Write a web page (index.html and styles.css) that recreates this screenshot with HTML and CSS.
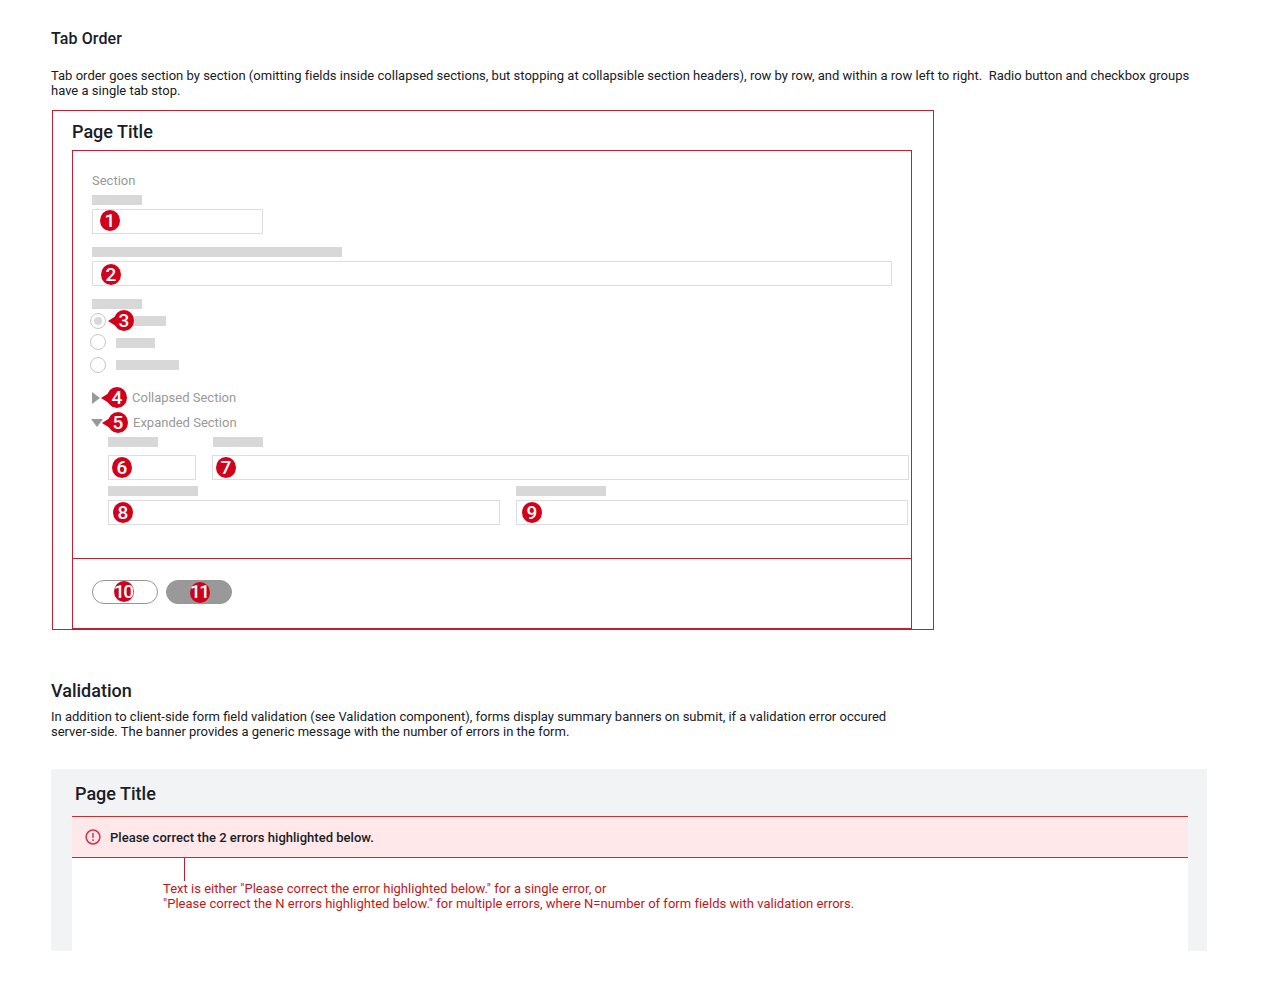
FILE: index.html
```html
<!DOCTYPE html>
<html lang="en">
<head>
<meta charset="utf-8">
<title>Form guidelines</title>
<link rel="stylesheet" href="styles.css">
</head>
<body>
<main class="doc">
  <section class="tab-order">
    <h2 class="heading heading-small">Tab Order</h2>
    <p class="copy">Tab order goes section by section (omitting fields inside collapsed sections, but stopping at collapsible section headers), row by row, and within a row left to right.&nbsp; Radio button and checkbox groups<br>have a single tab stop.</p>
    <div class="frame">
      <h3 class="page-title">Page Title</h3>
      <div class="form">
        <div class="form-body">
          <div class="section-label">Section</div>
          <div class="bar w50"></div>
          <div class="field short"><span class="marker m1">1</span></div>
          <div class="bar w250"></div>
          <div class="field"><span class="marker m2">2</span></div>
          <div class="bar w50"></div>
          <div class="radios">
            <div class="radio-row"><span class="radio checked"></span><span class="bar w50"></span><span class="marker pointed m3">3</span></div>
            <div class="radio-row second"><span class="radio"></span><span class="bar w39"></span></div>
            <div class="radio-row"><span class="radio"></span><span class="bar w63"></span></div>
          </div>
          <div class="toggle"><svg class="arrow-right" width="8" height="12" viewBox="0 0 8 12"><path d="M0 0L8 6L0 12Z"/></svg><span class="marker pointed m4">4</span><span class="toggle-label">Collapsed Section</span></div>
          <div class="toggle open"><svg class="arrow-down" width="12" height="8" viewBox="0 0 12 8"><path d="M0 0H12L6 8Z"/></svg><span class="marker pointed m5">5</span><span class="toggle-label">Expanded Section</span></div>
          <div class="nested">
            <div class="row first">
              <div class="col narrow"><div class="bar w50"></div><div class="field"><span class="marker m6">6</span></div></div>
              <div class="col wide"><div class="bar w50"></div><div class="field"><span class="marker m7">7</span></div></div>
            </div>
            <div class="row">
              <div class="col half"><div class="bar w90"></div><div class="field"><span class="marker m8">8</span></div></div>
              <div class="col half"><div class="bar w90"></div><div class="field"><span class="marker m9">9</span></div></div>
            </div>
          </div>
        </div>
        <div class="form-footer">
          <div class="button"><span class="marker double m10">10</span></div>
          <div class="button solid"><span class="marker double m11">11</span></div>
        </div>
      </div>
    </div>
  </section>
  <section class="validation">
    <h2 class="heading">Validation</h2>
    <p class="copy">In addition to client-side form field validation (see Validation component), forms display summary banners on submit, if a validation error occured<br>server-side. The banner provides a generic message with the number of errors in the form.</p>
    <div class="preview">
      <h3 class="page-title">Page Title</h3>
      <div class="banner">
        <svg class="alert" width="16" height="16" viewBox="0 0 16 16"><circle cx="8" cy="8" r="6.9"/><path d="M8 4V8.8M8 10.3V12"/></svg>
        <span>Please correct the 2 errors highlighted below.</span>
      </div>
      <div class="sheet">
        <div class="leader"></div>
        <p class="note">Text is either "Please correct the error highlighted below." for a single error, or<br>"Please correct the N errors highlighted below." for multiple errors, where N=number of form fields with validation errors.</p>
      </div>
    </div>
  </section>
</main>
</body>
</html>
```
FILE: styles.css
```css
* { box-sizing: border-box; }
body { margin: 0; background: #fff; color: #182026; font: 400 13px/15px Roboto, sans-serif; }
h2, h3, p { margin: 0; }
.doc { padding: 29px 0 0 51px; width: 1288px; height: 1001px; overflow: hidden; }
.heading { font-size: 18px; line-height: 22px; font-weight: 500; }
.heading-small { font-size: 16px; line-height: 20px; letter-spacing: 0.1px; }
.copy { white-space: nowrap; }
.tab-order .copy { margin-top: 19px; letter-spacing: 0.007px; }
.frame { width: 882px; height: 520px; margin: 12px 0 0 1px; padding: 0 21px 0 19px; border: 1px solid #c02034; }
.page-title { font-size: 18px; line-height: 22px; font-weight: 500; }
.frame .page-title { padding-top: 10px; height: 39px; }
.form { height: 479px; border: 1px solid #c02034; }
.form-body { height: 408px; padding: 22px 19px 0; border-bottom: 1px solid #c02034; }
.section-label { color: #999; height: 22px; }
.bar { height: 10px; background: #d8d8d8; flex: none; }
.w39 { width: 39px; }
.w50 { width: 50px; }
.w63 { width: 63px; }
.w90 { width: 90px; }
.w250 { width: 250px; }
.field { position: relative; height: 25px; margin: 4px 0 13px; border: 1px solid #ddd; }
.short { width: 171px; }
.radios { display: flex; flex-direction: column; gap: 7px; margin: 4px 0 0 -2px; }
.radio-row { position: relative; display: flex; align-items: center; gap: 10px; height: 16px; }
.radio-row.second { margin-top: -1px; height: 15px; }
.second .radio { margin-top: -2px; }
.radio { width: 16px; height: 16px; border: 1px solid #c6c6c6; border-radius: 50%; display: grid; place-items: center; flex: none; }
.checked::after { content: ""; width: 8px; height: 8px; border-radius: 50%; background: #d8d8d8; }
.toggle { position: relative; display: flex; align-items: center; height: 15px; margin-top: 17px; color: #999; }
.toggle.open { margin-top: 10px; }
.toggle svg { fill: #999; }
.arrow-right { margin-right: 32px; }
.arrow-down { margin: 0 30px 0 -1px; }
.nested { margin: 7px -17px 0 16px; }
.row { display: flex; gap: 16px; }
.row .field { margin-bottom: 0; }
.first { margin-bottom: 6px; }
.first .field { margin-top: 8px; }
.narrow { width: 88px; }
.wide { width: 697px; }
.wide .bar { margin-left: 1px; }
.half { width: 392px; }
.form-footer { display: flex; gap: 8px; padding: 21px 19px 0; }
.button { position: relative; width: 66px; height: 24px; border: 1px solid #979797; border-radius: 12px; }
.solid { background: #999; }
.marker { position: absolute; z-index: 1; width: 20px; height: 21px; border-radius: 50%; background: #d0021b; color: #fff; font-size: 19px; line-height: 22px; font-weight: 500; text-align: center; }
.double { display: flex; justify-content: center; letter-spacing: -1.5px; padding-right: 1.5px; }
.pointed::before { content: ""; position: absolute; z-index: -1; left: -6px; top: 4px; border: solid transparent; border-width: 7px 11px 7px 0; border-right-color: #d0021b; }
.m1 { left: 7px; top: 0; }
.m2 { left: 8px; top: 2px; }
.m3 { left: 24px; top: -3px; }
.m4 { left: 15px; top: -3px; }
.m5 { left: 16px; top: -3px; }
.m6 { left: 3px; top: 1px; }
.m7 { left: 3px; top: 1px; }
.m8 { left: 4px; top: 1px; }
.m9 { left: 5px; top: 1px; }
.m10 { left: 21px; top: 0; }
.m11 { left: 23px; top: 1px; line-height: 20px; }
.validation { margin-top: 50px; }
.validation .copy { margin-top: 7px; }
.preview { width: 1156px; height: 182px; margin-top: 30px; padding: 0 19px 0 21px; background: #f1f3f5; display: flex; flex-direction: column; }
.preview .page-title { padding: 14px 0 0 3px; height: 47px; }
.banner { height: 42px; flex: none; display: flex; align-items: center; gap: 9px; padding-left: 13px; background: #ffe8ea; border: solid #c23030; border-width: 1px 0; font-weight: 500; letter-spacing: 0.02px; }
.alert { fill: none; stroke: #db3048; stroke-width: 1.5; }
.sheet { flex: 1; background: #fff; }
.leader { width: 1px; height: 23px; margin-left: 112px; background: #b82035; }
.note { margin-left: 91px; color: #c01818; white-space: nowrap; letter-spacing: 0.015px; }
```
